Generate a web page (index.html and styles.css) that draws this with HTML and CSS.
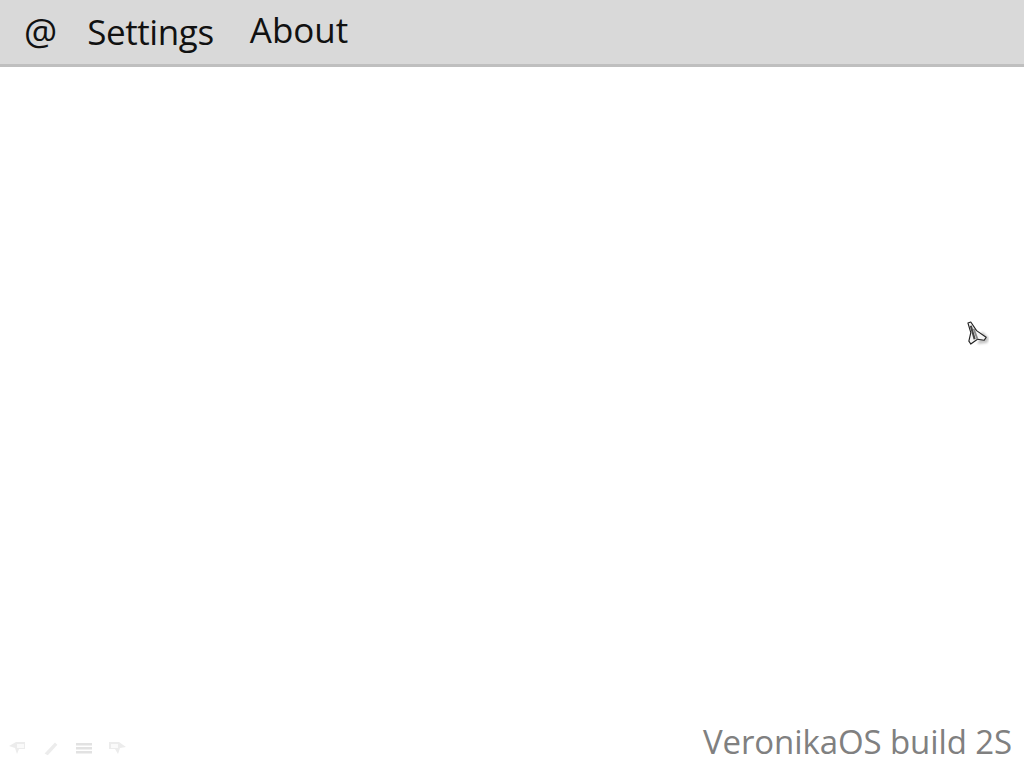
FILE: index.html
```html
<!DOCTYPE html>
<html lang="en">
<head>
<meta charset="utf-8">
<title>VeronikaOS</title>
<link rel="stylesheet" href="styles.css">
</head>
<body>
<div class="screen">
  <nav class="menu">
    <span class="item item-at">@</span>
    <span class="item item-settings">Settings</span>
    <span class="item item-about">About</span>
  </nav>
  <main class="content"></main>
  <footer class="footer">
    <div class="pen-tools">
      <svg class="tool" viewBox="0 0 20 16"><path d="M1 6 8 2h9v7H11l-2 5-2-6z" fill="#ececec"/><path d="M9 4h7v4H9z" fill="#fafafa"/></svg>
      <svg class="tool" viewBox="0 0 20 20"><path d="M2 17 15 3l3 3L6 19z" fill="#ececec"/></svg>
      <svg class="tool" viewBox="0 0 20 16"><path d="M2 3h16v2.4H2zM2 7h16v2.4H2zM2 11h16v2.4H2z" fill="#e2e2e2"/></svg>
      <svg class="tool" viewBox="0 0 20 16"><path d="M19 7 12 2H2v7h6l3 5 2-6z" fill="#ececec"/><path d="M4 4h7v4H4z" fill="#fafafa"/></svg>
    </div>
    <div class="build">VeronikaOS build 2S</div>
  </footer>
  <svg class="cursor" viewBox="0 0 24 26">
    <path class="cursor-shadow" d="M12 24 22 23 24 18 17 11z"/>
    <path d="M2 2 5 1 11 10 21 17 19 20 12 19 5 24 3 21 5 12z" fill="#f4f4f4" stroke="#222" stroke-width="1.2" stroke-linejoin="round"/>
    <path d="M5 5 9 19" stroke="#444" stroke-width="2.2"/>
    <path d="M8 8 12 19" stroke="#888" stroke-width="2"/>
  </svg>
</div>
</body>
</html>
```
FILE: styles.css
```css
html, body {
  margin: 0;
  padding: 0;
  background: #fff;
}
.screen {
  position: relative;
  width: 1024px;
  height: 768px;
  display: flex;
  flex-direction: column;
  overflow: hidden;
  font-family: "Open Sans", "Noto Sans", sans-serif;
}
.menu {
  display: flex;
  align-items: flex-start;
  height: 64px;
  background: #d9d9d9;
  border-bottom: 3px solid #bfbfbf;
  padding-left: 24px;
  color: #111;
  font-size: 35px;
  line-height: 44px;
}
.item-at { padding-top: 9px; margin-right: 30px; font-size: 37px; }
.item-settings { padding-top: 10px; margin-right: 36px; letter-spacing: -0.4px; }
.item-about { padding-top: 8px; }
.content { flex: 1; }
.footer {
  display: flex;
  justify-content: space-between;
  align-items: flex-end;
  padding: 0 12px 4px 8px;
}
.pen-tools {
  display: flex;
  gap: 13px;
  padding-bottom: 8px;
  filter: blur(0.7px);
}
.tool { width: 20px; height: 16px; display: block; }
.build {
  color: #808080;
  font-size: 33px;
  line-height: 44px;
  letter-spacing: -0.1px;
}
.cursor {
  position: absolute;
  left: 966px;
  top: 321px;
  width: 23px;
  height: 25px;
}
.cursor-shadow {
  fill: #c4c4c4;
  filter: blur(1.2px);
}
```
